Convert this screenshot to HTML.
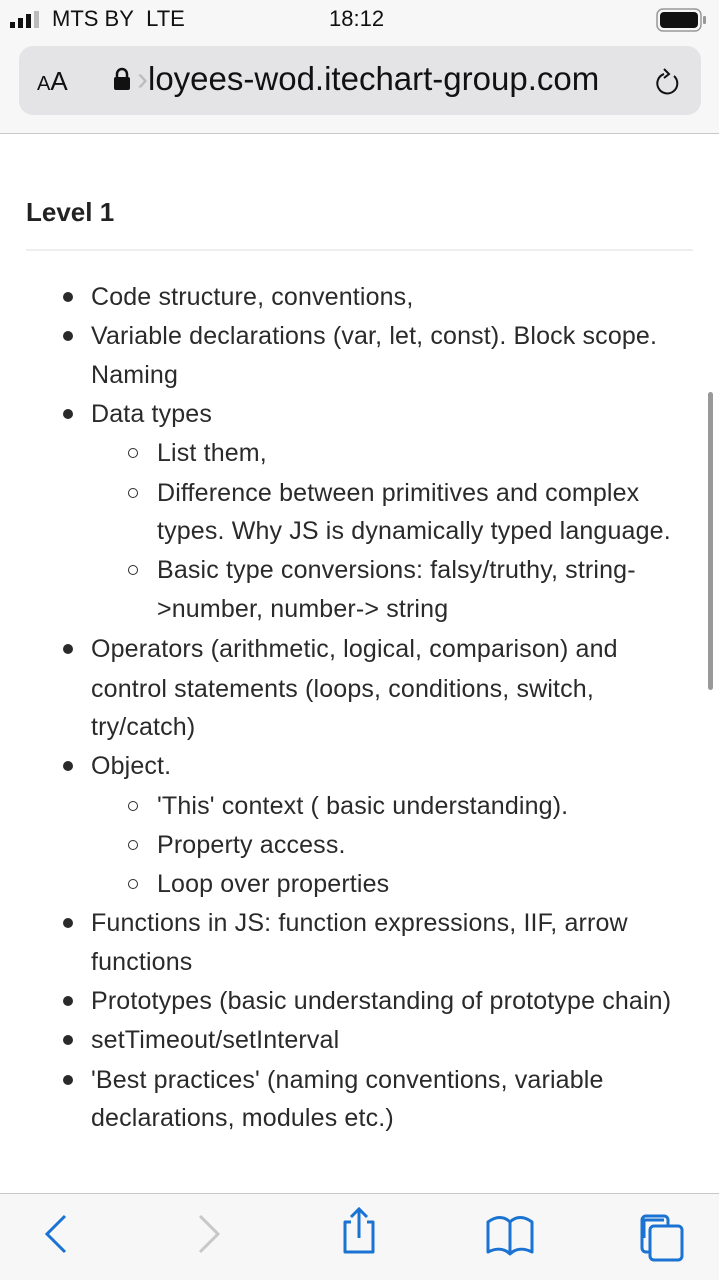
<!DOCTYPE html>
<html><head><meta charset="utf-8"><style>
*{margin:0;padding:0;box-sizing:border-box}
body{width:719px;height:1280px;position:relative;background:#fff;font-family:"Liberation Sans",sans-serif;color:#222;overflow:hidden}
.top{position:absolute;left:0;top:0;width:719px;height:134px;background:#f7f7f7;border-bottom:1px solid #c8c8c8}
.sb{position:absolute;top:6px;font-size:22px;color:#111}
.url{position:absolute;left:19px;top:46px;width:682px;height:69px;background:#e4e4e6;border-radius:14px}
.l{position:absolute;white-space:nowrap;font-size:25px;letter-spacing:0.15px;line-height:30px;color:#2a2a2a}
.b{position:absolute;width:10px;height:10px;border-radius:50%;background:#2a2a2a}
.c{position:absolute;width:10px;height:10px;border-radius:50%;border:1.6px solid #2a2a2a}
.bot{position:absolute;left:0;top:1193px;width:719px;height:87px;background:#f7f7f7;border-top:1px solid #c8c8c8}
</style></head><body>
<div class="top">
 <svg style="position:absolute;left:10px;top:11px" width="34" height="18"><rect x="0" y="11" width="5" height="6" fill="#111"/><rect x="8" y="7" width="5" height="10" fill="#111"/><rect x="16" y="3" width="5" height="14" fill="#111"/><rect x="24" y="0" width="5" height="17" fill="#bbb"/></svg>
 <div class="sb" style="left:52px">MTS BY&nbsp;&nbsp;LTE</div>
 <div class="sb" style="left:329px">18:12</div>
 <svg style="position:absolute;left:656px;top:8px" width="52" height="24"><rect x="1" y="1" width="44" height="22" rx="6" fill="none" stroke="#999" stroke-width="1.5"/><rect x="4" y="4" width="38" height="16" rx="4" fill="#111"/><rect x="47" y="8" width="3" height="8" rx="1" fill="#999"/></svg>
 <div class="url">
  <div style="position:absolute;left:18px;top:20px;font-size:26px;color:#111"><span style="font-size:20px">A</span>A</div>
  <svg style="position:absolute;left:94px;top:21px" width="18" height="24"><path d="M4 10V7a5 5 0 0 1 10 0v3" fill="none" stroke="#111" stroke-width="2.5"/><rect x="1" y="10" width="16" height="13" rx="2" fill="#111"/></svg>
  <div style="position:absolute;left:118px;top:14px;font-size:33px;color:#111"><span style="color:#bbb">›</span>loyees-wod.itechart-group.com</div>
  <svg style="position:absolute;left:633px;top:20px" width="30" height="32"><path d="M22 10A10 10 0 1 1 12 8" fill="none" stroke="#111" stroke-width="2"/><path d="M12 3l5 5-5 4" fill="none" stroke="#111" stroke-width="2"/></svg>
 </div>
</div>
<div style="position:absolute;left:26px;top:197px;font-size:26px;font-weight:bold;color:#222">Level 1</div>
<div style="position:absolute;left:26px;top:249px;width:667px;height:2px;background:#eee"></div>

<div class="b" style="left:63px;top:292px"></div><div class="l" style="left:91px;top:282px">Code structure, conventions,</div>
<div class="b" style="left:63px;top:331px"></div><div class="l" style="left:91px;top:321px">Variable declarations (var, let, const). Block scope.</div>
<div class="l" style="left:91px;top:360px">Naming</div>
<div class="b" style="left:63px;top:409px"></div><div class="l" style="left:91px;top:399px">Data types</div>
<div class="c" style="left:128px;top:448px"></div><div class="l" style="left:157px;top:438px">List them,</div>
<div class="c" style="left:128px;top:488px"></div><div class="l" style="left:157px;top:478px">Difference between primitives and complex</div>
<div class="l" style="left:157px;top:516px">types. Why JS is dynamically typed language.</div>
<div class="c" style="left:128px;top:565px"></div><div class="l" style="left:157px;top:555px">Basic type conversions: falsy/truthy, string-</div>
<div class="l" style="left:157px;top:594px">&gt;number, number-&gt; string</div>
<div class="b" style="left:63px;top:644px"></div><div class="l" style="left:91px;top:634px">Operators (arithmetic, logical, comparison) and</div>
<div class="l" style="left:91px;top:674px">control statements (loops, conditions, switch,</div>
<div class="l" style="left:91px;top:712px">try/catch)</div>
<div class="b" style="left:63px;top:761px"></div><div class="l" style="left:91px;top:751px">Object.</div>
<div class="c" style="left:128px;top:801px"></div><div class="l" style="left:157px;top:791px">'This' context ( basic understanding).</div>
<div class="c" style="left:128px;top:840px"></div><div class="l" style="left:157px;top:830px">Property access.</div>
<div class="c" style="left:128px;top:879px"></div><div class="l" style="left:157px;top:869px">Loop over properties</div>
<div class="b" style="left:63px;top:918px"></div><div class="l" style="left:91px;top:908px">Functions in JS: function expressions, IIF, arrow</div>
<div class="l" style="left:91px;top:947px">functions</div>
<div class="b" style="left:63px;top:996px"></div><div class="l" style="left:91px;top:986px">Prototypes (basic understanding of prototype chain)</div>
<div class="b" style="left:63px;top:1035px"></div><div class="l" style="left:91px;top:1025px">setTimeout/setInterval</div>
<div class="b" style="left:63px;top:1075px"></div><div class="l" style="left:91px;top:1065px">'Best practices' (naming conventions, variable</div>
<div class="l" style="left:91px;top:1103px">declarations, modules etc.)</div>

<div style="position:absolute;left:708px;top:392px;width:5px;height:298px;border-radius:3px;background:#999"></div>

<div class="bot">
 <svg style="position:absolute;left:40px;top:20px" width="30" height="40"><path d="M25 2L7 20l18 18" fill="none" stroke="#1a73d2" stroke-width="3"/></svg>
 <svg style="position:absolute;left:195px;top:20px" width="30" height="40"><path d="M5 2l18 18L5 38" fill="none" stroke="#c8c8c8" stroke-width="3"/></svg>
 <svg style="position:absolute;left:338px;top:12px" width="42" height="50"><path d="M13 16H7v30h28V16h-6" fill="none" stroke="#1a73d2" stroke-width="3" stroke-linejoin="round"/><path d="M21 32V4M13 11l8-8 8 8" fill="none" stroke="#1a73d2" stroke-width="3"/></svg>
 <svg style="position:absolute;left:485px;top:20px" width="50" height="42"><path d="M3 38V8c8-6 16-6 22 0c6-6 14-6 22 0v30c-8-4-16-4-22 2c-6-6-14-6-22-2zM25 8v32" fill="none" stroke="#1a73d2" stroke-width="3" stroke-linejoin="round"/></svg>
 <svg style="position:absolute;left:638px;top:20px" width="50" height="50"><path d="M6 24V6h20" fill="none" stroke="#1a73d2" stroke-width="3"/><rect x="4" y="2" width="26" height="36" rx="4" fill="none" stroke="#1a73d2" stroke-width="3"/><rect x="12" y="12" width="32" height="34" rx="4" fill="#f7f7f7" stroke="#1a73d2" stroke-width="3"/></svg>
</div>
</body></html>
